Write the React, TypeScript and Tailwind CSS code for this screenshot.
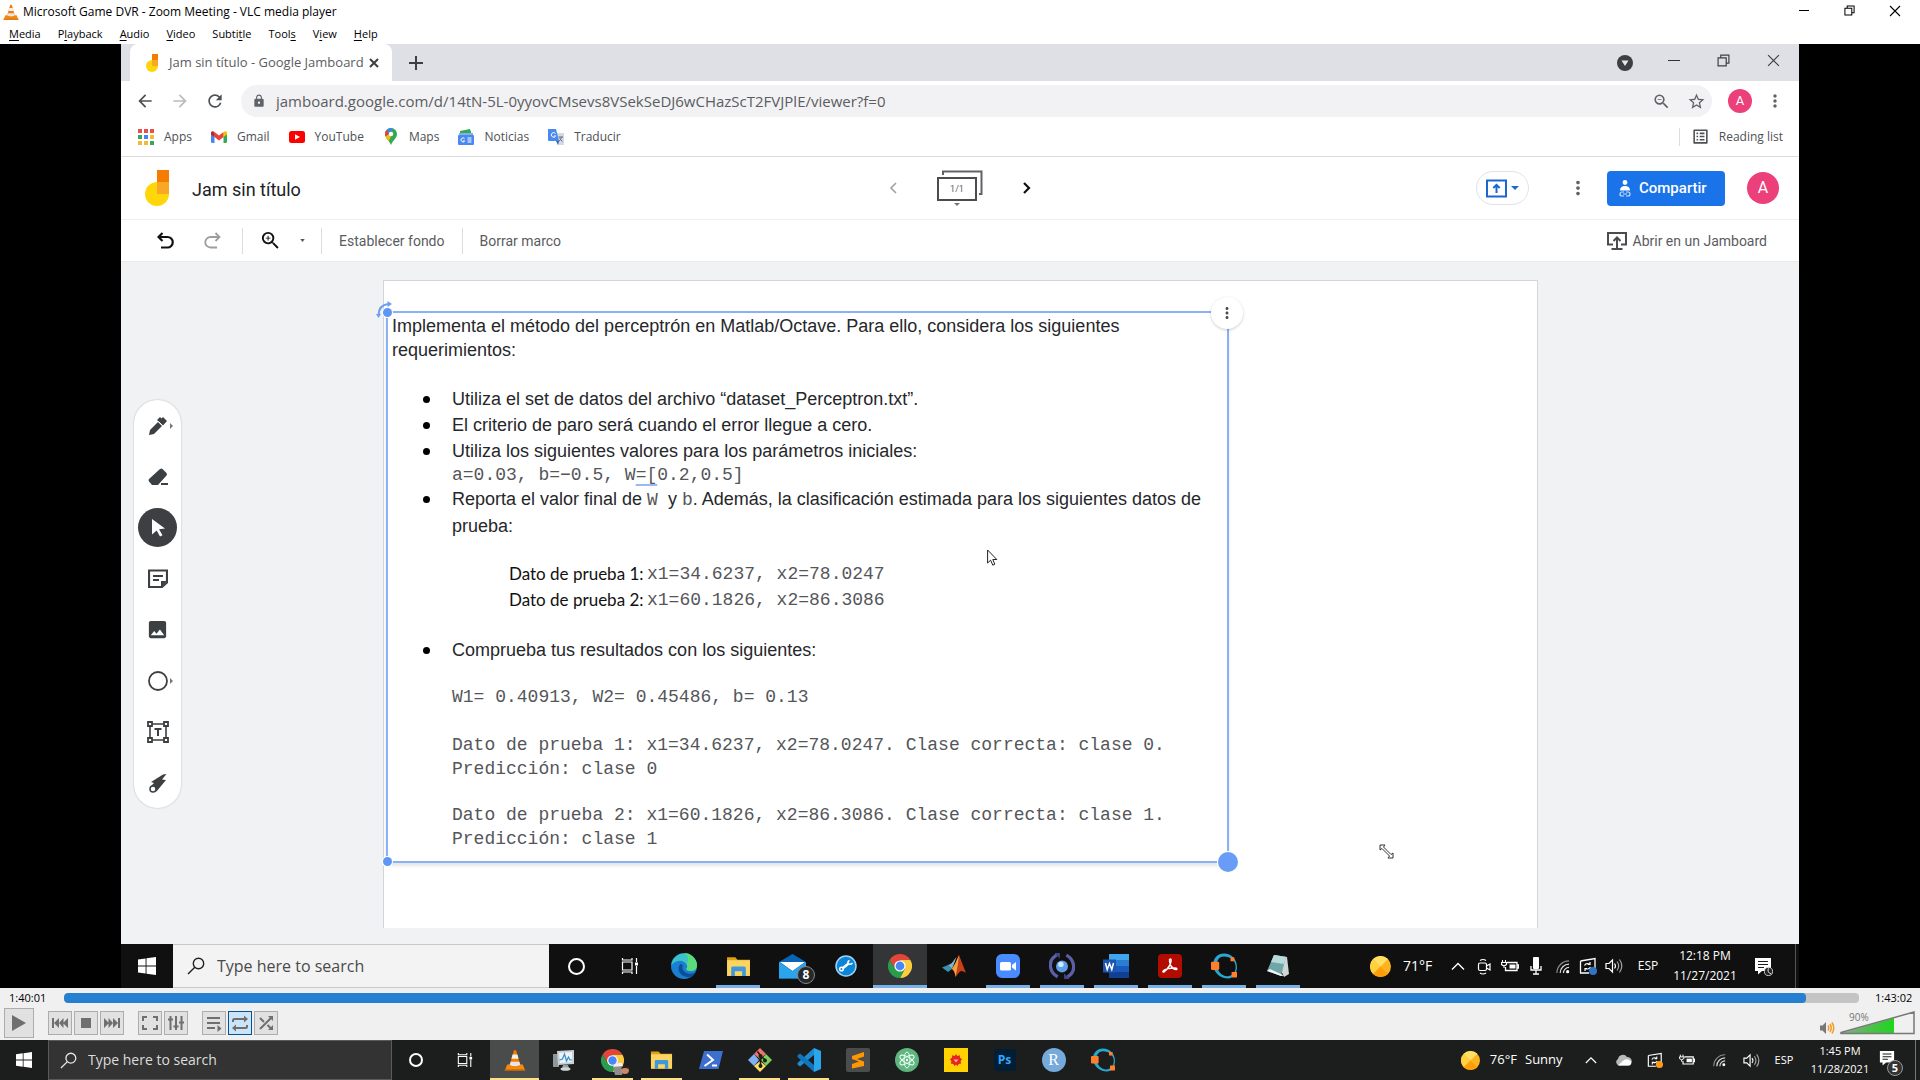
import React, { ReactNode } from "react";
import {
  MdArrowBack,
  MdArrowForward,
  MdRefresh,
  MdLock,
  MdStarBorder,
  MdZoomIn,
  MdZoomOut,
  MdMoreVert,
  MdImage,
  MdOutlineListAlt,
} from "react-icons/md";

/* ---------- shared drawings ---------- */

function Svg({ className, box = "0 0 24 24", children }: { className: string; box?: string; children: ReactNode }) {
  return (
    <svg className={className} viewBox={box} fill="none" aria-hidden="true">
      {children}
    </svg>
  );
}

function Cone({ className }: { className: string }) {
  return (
    <Svg className={className}>
      <path d="M3.500 17h17l2.500 6.200H1z" fill="#f58a0c" />
      <path d="M1 22h22l.4 1.600H.6z" fill="#c96a05" />
      <path d="M10.700 1.600Q12 .4 13.300 1.600L18 18.200Q12 21.600 6 18.200z" fill="#f47b00" />
      <path d="M9.400 6h5.200l1.300 4.600H8.100z" fill="#f1f1f1" />
      <path d="M7.200 14h9.600l1 3.400Q12 20 6.200 17.400z" fill="#e6e6e6" />
    </Svg>
  );
}

function WindowsLogo({ className }: { className: string }) {
  return (
    <Svg className={className} box="0 0 18 18">
      <path d="M0 2.500L7.600 1.400V8.500H0zM8.500 1.300L18 0V8.500H8.500zM0 9.500H7.600V16.600L0 15.500zM8.500 9.500H18V18L8.500 16.700z" fill="#fff" />
    </Svg>
  );
}

function Magnifier({ className }: { className: string }) {
  return (
    <Svg className={className} box="0 0 18 18">
      <circle cx="11.500" cy="6.500" r="5.200" stroke="currentColor" strokeWidth="1.400" />
      <path d="M7.800 10.200L1 17" stroke="currentColor" strokeWidth="1.400" />
    </Svg>
  );
}

function TaskView({ className }: { className: string }) {
  return (
    <Svg className={className} box="0 0 18 18">
      <path d="M1.500 5h9.500v8H1.500zM1.500 1v2h9.500V1M1.500 17v-2h9.500v2M15.500 1v4M15.500 9v8" stroke="#fff" strokeWidth="1.200" />
      <path d="M14 5.500h3v3h-3z" fill="#fff" />
    </Svg>
  );
}

function Chrome({ className }: { className: string }) {
  return (
    <Svg className={className}>
      <path d="M1.600 6A12 12 0 0 1 22.400 6H12L7.200 14.800z" fill="#e2463a" />
      <path d="M22.400 6A12 12 0 0 1 12 24L16.800 14.800 12 6z" fill="#fccb3f" />
      <path d="M12 24A12 12 0 0 1 1.600 6L7.200 14.800H16.800z" fill="#2a9d4c" />
      <circle cx="12" cy="12" r="5.600" fill="#fff" />
      <circle cx="12" cy="12" r="4.400" fill="#4a86f5" />
    </Svg>
  );
}

function Folder({ className }: { className: string }) {
  return (
    <Svg className={className}>
      <path d="M1 3h8l2 2.500h12V21H1z" fill="#e0a010" />
      <path d="M1 6h22v15H1z" fill="#fcd462" />
      <path d="M5 21v-7.500Q5 12 6.500 12h11Q19 12 19 13.500V21h-3.500v-4.500h-7V21z" fill="#3f97dc" />
    </Svg>
  );
}

function Octave({ className }: { className: string }) {
  return (
    <Svg className={className}>
      <path d="M12 .5C19 .5 24 6 24 13c0 6-3.500 10.500-8 10.500C8.500 23.500 2 17.500 2 10.500 2 5 6 .5 12 .5zm0 2.800C8 3.300 5.400 6.500 5.400 10.800c0 5.600 4.600 10.600 9.600 10.600 4.500 0 7.800-3.400 7.800-8.400C22.800 7.500 18 3.300 12 3.300z" fill="#28a8cf" fillRule="evenodd" />
      <rect x="0" y="8" width="7.600" height="7.600" rx="1" fill="#ff7f2a" />
      <rect x="18" y="4" width="3.600" height="3.600" rx=".5" fill="#ff7f2a" />
      <rect x="19" y="17.500" width="5" height="5" rx=".5" fill="#ff7f2a" />
    </Svg>
  );
}

function Sun({ className }: { className: string }) {
  return (
    <Svg className={className}>
      <circle cx="12" cy="12" r="12" fill="#ffb41f" />
      <path d="M3.500 3.500A12 12 0 0 1 20.500 3.500L12 12z" fill="#ffe064" />
      <path d="M3.500 3.500A12 12 0 0 0 3.500 20.500L12 12z" fill="#ffd040" />
      <path d="M3.500 20.500A12 12 0 0 0 20.500 20.500L12 12z" fill="#ff9d0a" />
    </Svg>
  );
}

function ChevronUp({ className }: { className: string }) {
  return (
    <Svg className={className} box="0 0 14 14">
      <path d="M1 10.500L7 4.500l6 6" stroke="#fff" strokeWidth="1.400" />
    </Svg>
  );
}

function Wifi({ className }: { className: string }) {
  return (
    <Svg className={className} box="0 0 16 16">
      <path d="M2 15A13 13 0 0 1 15 2" stroke="#8b8b8b" strokeWidth="1.300" />
      <path d="M5.500 15A9.500 9.500 0 0 1 15 5.500M9 15a6 6 0 0 1 6-6" stroke="#ddd" strokeWidth="1.300" />
      <circle cx="13.500" cy="13.500" r="1.700" fill="#fff" />
    </Svg>
  );
}

function Volume({ className }: { className: string }) {
  return (
    <Svg className={className} box="0 0 18 18">
      <path d="M1 6.500h3L7.500 3v12L4 11.500H1z" stroke="#fff" strokeWidth="1.200" />
      <path d="M9.500 6.500q2 2.500 0 5" stroke="#fff" strokeWidth="1.200" />
      <path d="M12 4.500q3.400 4.500 0 9M14.500 2.500q4.600 6.500 0 13" stroke="#a5a5a5" strokeWidth="1.200" />
    </Svg>
  );
}

function UpdateIcon({ className, dot }: { className: string; dot: string }) {
  return (
    <Svg className={className} box="0 0 18 18">
      <path d="M1.500 4L16 1.500V14M1.500 4v12H10" stroke="#fff" strokeWidth="1.300" />
      <path d="M5.500 8.500q1.500-3 5-1.500M11 5v2.500H8.500M11.500 10q-1.500 3-5 1.500M6 14v-2.500h2" stroke="#fff" strokeWidth="1.200" />
      <circle cx="14" cy="14" r="4" fill={dot} />
    </Svg>
  );
}

function Battery({ className }: { className: string }) {
  return (
    <Svg className={className} box="0 0 18 18">
      <path d="M6 5.500h10v8H4.500V10M16 8h1.500v3H16" stroke="#fff" strokeWidth="1.300" />
      <path d="M8.500 7.500h6v4h-6z" fill="#fff" />
      <path d="M1.500 3v2.500M4.500 3v2.500M.5 5.500h5v2q-2.500 2.500-5 0zM3 8.500V11" stroke="#fff" strokeWidth="1.100" />
    </Svg>
  );
}

function Note({ className }: { className: string }) {
  return (
    <Svg className={className} box="0 0 18 18">
      <path d="M1 1h16v13H8l-4 3.500V14H1z" fill="#fff" />
      <path d="M4 4.500h10M4 7.500h10M4 10.500h6" stroke="#1c1c1c" strokeWidth="1.200" />
    </Svg>
  );
}

function Jam({ className }: { className: string }) {
  return (
    <Svg className={className} box="0 0 24 36">
      <path d="M12 0h12v12H12z" fill="#f57c00" />
      <path d="M12 12H24V24A12 12 0 1 1 12 12z" fill="#ffd60a" />
      <path d="M12 12h12v12H12z" fill="#f9a825" />
    </Svg>
  );
}

function RestoreGlyph({ className }: { className: string }) {
  return (
    <Svg className={className} box="0 0 12 12">
      <path d="M1 3.500h7.500V11H1zM3.500 3.500V1H11v7.500H8.500" stroke="currentColor" strokeWidth="1.100" />
    </Svg>
  );
}

function CloseGlyph({ className }: { className: string }) {
  return (
    <Svg className={className} box="0 0 12 12">
      <path d="M1 1l10 10M11 1L1 11" stroke="currentColor" strokeWidth="1.100" />
    </Svg>
  );
}

/* ---------- player window ---------- */

const MENUS: [string, string, string][] = [
  ["", "M", "edia"],
  ["P", "l", "ayback"],
  ["", "A", "udio"],
  ["", "V", "ideo"],
  ["Subti", "t", "le"],
  ["Tool", "s", ""],
  ["V", "i", "ew"],
  ["", "H", "elp"],
];

function PlayerHeader() {
  return (
    <header className="bg-white text-black">
      <div className="flex h-6 items-center pl-[3px]">
        <Cone className="h-4 w-4" />
        <h1 className="ml-1 text-xs">Microsoft Game DVR - Zoom Meeting - VLC media player</h1>
        <div className="ml-auto flex h-full pr-[2px] pb-[3px]">
          <button aria-label="Minimize" className="flex w-[45px] items-center justify-center">
            <span className="h-px w-[10px] bg-black" />
          </button>
          <button aria-label="Restore" className="flex w-[46px] items-center justify-center">
            <RestoreGlyph className="h-[11px] w-[11px]" />
          </button>
          <button aria-label="Close" className="flex w-[46px] items-center justify-center">
            <CloseGlyph className="h-3 w-3" />
          </button>
        </div>
      </div>
      <nav className="flex h-5 items-center gap-[17px] pl-[9px] text-[11px]">
        {MENUS.map(([a, b, c]) => (
          <button key={a + b + c}>
            {a}
            <span className="underline underline-offset-2">{b}</span>
            {c}
          </button>
        ))}
      </nav>
    </header>
  );
}

function PlayerButton({ label, active, children }: { label: string; active?: boolean; children: ReactNode }) {
  return (
    <button
      aria-label={label}
      className={
        active
          ? "flex h-6 w-6 items-center justify-center border border-[#00549a] bg-[#cce4f7]"
          : "flex h-6 w-6 items-center justify-center border border-[#adadad] bg-[#e1e1e1]"
      }
    >
      {children}
    </button>
  );
}

function PlayerControls() {
  return (
    <section className="h-[52px] bg-[#f0f0f0] text-black">
      <div className="flex h-5 items-center pb-px text-[11px]">
        <span className="w-16 pl-[9px] leading-none">1:40:01</span>
        <div className="relative h-[10px] flex-1 overflow-hidden rounded bg-[#c4c4c4]">
          <div className="h-full rounded bg-[#267fd0]" style={{ width: `${(6001 / 6182) * 100}%` }} />
          <input type="range" aria-label="Position" min={0} max={6182} defaultValue={6001} className="absolute inset-0 h-full w-full opacity-0" />
        </div>
        <span className="w-[61px] pl-4 leading-none">1:43:02</span>
      </div>
      <div className="flex items-center pl-1">
        <button aria-label="Play" className="flex h-[30px] w-[30px] items-center justify-center border border-[#adadad] bg-[#e1e1e1]">
          <Svg className="h-4 w-4" box="0 0 16 16">
            <path d="M1 0L15 8 1 16z" fill="#6f6f6f" />
          </Svg>
        </button>
        <div className="ml-[14px] flex gap-[2px]">
          <PlayerButton label="Previous">
            <Svg className="h-4 w-4" box="0 0 16 16">
              <path d="M0 3h2v10H0zM2 8l5-5v10zM7 8l4.500-5v10zM11 8l5-5v10z" fill="#6f6f6f" />
            </Svg>
          </PlayerButton>
          <PlayerButton label="Stop">
            <span className="h-[10px] w-[10px] bg-[#6f6f6f]" />
          </PlayerButton>
          <PlayerButton label="Next">
            <Svg className="h-4 w-4" box="0 0 16 16">
              <path d="M14 3h2v10h-2zM14 8L9 3v10zM9 8L4.500 3v10zM5 8L0 3v10z" fill="#6f6f6f" />
            </Svg>
          </PlayerButton>
        </div>
        <div className="ml-[14px] flex gap-[2px]">
          <PlayerButton label="Fullscreen">
            <Svg className="h-[18px] w-[18px]" box="0 0 18 18">
              <path d="M6 3H2v4M12 3h4v4M6 15H2v-4M12 15h4v-4" stroke="#6f6f6f" strokeWidth="2" />
            </Svg>
          </PlayerButton>
          <PlayerButton label="Extended settings">
            <Svg className="h-[18px] w-[18px]" box="0 0 18 18">
              <path d="M3.500 2v14M9 2v14M14.500 2v14M1 5.500h5M6.500 12.500h5M12 8.500h5" stroke="#6f6f6f" strokeWidth="2" />
            </Svg>
          </PlayerButton>
        </div>
        <div className="ml-[14px] flex gap-[2px]">
          <PlayerButton label="Playlist">
            <Svg className="h-[18px] w-[18px]" box="0 0 18 18">
              <path d="M2 4h13M2 9h13M2 14h8" stroke="#6f6f6f" strokeWidth="2" />
              <path d="M12.500 11l4 3.500-4 3.500z" fill="#6f6f6f" />
            </Svg>
          </PlayerButton>
          <PlayerButton label="Loop" active>
            <Svg className="h-[18px] w-[18px]" box="0 0 18 18">
              <path d="M2 8V6.500Q2 5 3.500 5H14M16 11v1.500q0 1.500-1.500 1.500H4" stroke="#6f6f6f" strokeWidth="2" />
              <path d="M13 1.500L17 5l-4 3.500zM5 10.500L1 14l4 3.500z" fill="#6f6f6f" />
            </Svg>
          </PlayerButton>
          <PlayerButton label="Random">
            <Svg className="h-[18px] w-[18px]" box="0 0 18 18">
              <path d="M3 15L14 4M3 4l4 4M10.500 11l4 4" stroke="#6f6f6f" strokeWidth="2" />
              <path d="M11 2h5v5zM16 11v5h-5z" fill="#6f6f6f" />
            </Svg>
          </PlayerButton>
        </div>
        <div className="ml-auto flex items-end pr-1">
          <Svg className="mr-[5px] h-[14px] w-[15px]" box="0 0 15 14">
            <path d="M0 4.500h2.500L6 1v12L2.500 9.500H0z" fill="#777" />
            <path d="M8 4.500q1.500 2.500 0 5M10 3q2.500 4 0 8M12 1.500q3.500 5.500 0 11" stroke="#f59a23" strokeWidth="1.500" />
          </Svg>
          <div className="relative h-6 w-[76px]">
            <Svg className="h-6 w-[76px]" box="0 0 76 24">
              <path d="M2 22L54 7V22z" fill="url(#vol)" />
              <path d="M1 21.500L74 1V22.500H1z" stroke="#777" strokeWidth="1.500" />
              <defs>
                <linearGradient id="vol" x1="0" y1="0" x2="54" y2="0" gradientUnits="userSpaceOnUse">
                  <stop stopColor="#86a886" />
                  <stop offset="1" stopColor="#1ed61e" />
                </linearGradient>
              </defs>
            </Svg>
            <span className="absolute left-[9px] top-0 text-[10px] leading-3 text-[#777]">90%</span>
            <input type="range" aria-label="Volume" min={0} max={125} defaultValue={90} className="absolute inset-0 h-full w-full opacity-0" />
          </div>
        </div>
      </div>
    </section>
  );
}

/* ---------- host taskbar ---------- */

function HostApp({ label, state, children }: { label: string; state?: "open" | "active"; children: ReactNode }) {
  return (
    <button
      aria-label={label}
      className={
        state === "active"
          ? "relative flex h-full w-[49px] items-center justify-center bg-[#4a4b4b]"
          : "relative flex h-full w-[49px] items-center justify-center"
      }
    >
      {children}
      {state && (
        <span className={state === "active" ? "absolute inset-x-0 bottom-0 h-[2px] bg-[#ffe08a]" : "absolute inset-x-1 bottom-0 h-[2px] bg-[#ffe08a]"} />
      )}
    </button>
  );
}

function HostTaskbar() {
  return (
    <footer className="flex h-10 items-center bg-[#1c1e1d] text-white">
      <button aria-label="Start" className="flex h-full w-12 items-center justify-center">
        <WindowsLogo className="h-4 w-4" />
      </button>
      <label className="flex h-full w-[344px] items-center border border-[#5a5a5a] bg-[#333] pl-[11px] text-[#e6e6e6]">
        <Magnifier className="h-[17px] w-[17px]" />
        <input aria-label="Search" placeholder="Type here to search" className="ml-[11px] w-64 bg-transparent text-sm outline-none placeholder:text-[#dcdcdc]" />
      </label>
      <button aria-label="Cortana" className="flex h-full w-12 items-center justify-center">
        <span className="h-[14px] w-[14px] rounded-full border-2 border-white" />
      </button>
      <button aria-label="Task View" className="flex h-full w-[50px] items-center justify-center">
        <TaskView className="h-4 w-4" />
      </button>
      <HostApp label="VLC" state="active">
        <Cone className="h-[22px] w-[22px]" />
      </HostApp>
      <HostApp label="Performance Monitor">
        <Svg className="h-6 w-6">
          <path d="M1 6h6v13H1z" fill="#8f979b" />
          <path d="M5 3l17-1v14L6 17z" fill="#c9cfd2" />
          <path d="M7 5l13-1v10L8 15z" fill="#eef3f7" />
          <path d="M7.500 12l3-1 2-5 2 7 2-4 1.500 3h2" stroke="#2e8fd0" strokeWidth="1.200" />
          <path d="M11 17h5l1 3h-7z" fill="#9aa2a6" />
          <ellipse cx="13.500" cy="21" rx="5" ry="1.800" fill="#d0d5d8" />
        </Svg>
      </HostApp>
      <HostApp label="Chrome" state="open">
        <Chrome className="h-[23px] w-[23px]" />
        <Svg className="absolute bottom-1 right-2 h-[14px] w-4" box="0 0 16 14">
          <path d="M0 5q4-5 9-3l2 3-2 8H2z" fill="#8d8f8f" />
          <path d="M0 5q3-5 9-4l1 3z" fill="#efefef" />
          <circle cx="12" cy="8" r="4" fill="#c78a68" />
          <path d="M8 7q1-4 5-3.500 3 .5 3 4-3-2.500-8-.5z" fill="#2d1d18" />
        </Svg>
      </HostApp>
      <HostApp label="File Explorer" state="open">
        <Folder className="h-6 w-[23px]" />
      </HostApp>
      <HostApp label="PowerShell">
        <Svg className="h-6 w-6">
          <path d="M5 3h19l-4.500 18H0z" fill="#3d6fd1" />
          <path d="M8 6.500l6 5.500-8.500 6M13 17.500h5" stroke="#fff" strokeWidth="2" />
        </Svg>
      </HostApp>
      <HostApp label="Git" state="open">
        <Svg className="h-6 w-6">
          <path d="M12 0l6 6-6 5-6-5z" fill="#f1736c" />
          <path d="M6 6l5 6-5 6-6-6z" fill="#7fb0f5" />
          <path d="M18 6l6 6-6 6-5-6z" fill="#80cf5a" />
          <path d="M12 13l6 5-6 6-6-6z" fill="#ffdd66" />
          <path d="M9.500 3.500l3 4v11M12.500 8l5 4" stroke="#1c1e1d" strokeWidth="1.600" />
          <circle cx="12.500" cy="8" r="2" fill="#1c1e1d" />
          <circle cx="12.500" cy="18" r="2" fill="#1c1e1d" />
          <circle cx="17" cy="12.500" r="2" fill="#1c1e1d" />
        </Svg>
      </HostApp>
      <HostApp label="VS Code" state="open">
        <Svg className="h-6 w-6">
          <path d="M17 0l7 3v18l-7 3z" fill="#2aa6ef" />
          <path d="M17 0v7L3 18.500.5 16.500V15z" fill="#1f8ad2" />
          <path d="M17 24v-7L3 5.500.5 7.500V9z" fill="#0f75bd" />
        </Svg>
      </HostApp>
      <HostApp label="Sublime Text">
        <Svg className="h-6 w-6">
          <rect width="24" height="24" rx="2" fill="#4c4c4c" />
          <path d="M6 8l12-4v4.500L11 11l7 2.500V18L6 20.500V16l7-2.500L6 11z" fill="#ff9800" />
        </Svg>
      </HostApp>
      <HostApp label="Atom">
        <Svg className="h-6 w-6">
          <circle cx="12" cy="12" r="12" fill="#5fb57d" />
          <g stroke="#e5fff0" strokeWidth="1">
            <ellipse cx="12" cy="12" rx="3" ry="8" />
            <ellipse cx="12" cy="12" rx="3" ry="8" transform="rotate(60 12 12)" />
            <ellipse cx="12" cy="12" rx="3" ry="8" transform="rotate(120 12 12)" />
          </g>
          <circle cx="12" cy="12" r="1.200" fill="#fff" />
        </Svg>
      </HostApp>
      <HostApp label="Mathematica">
        <Svg className="h-6 w-6">
          <path d="M0 0h24v24H0z" fill="#ffd200" />
          <path d="M12 6l1.300 2 2.500-.8.200 2.600 2.200 1.400-1.600 1.900.6 2.400-2.500.4-1.200 2.100L12 16.500 10.500 18l-1.200-2.100-2.500-.4.600-2.400-1.600-1.900L8 9.800l.2-2.600 2.500.8z" fill="#e52520" />
          <path d="M9.500 11.500h5L12 14.500z" fill="#ff9f9a" />
        </Svg>
      </HostApp>
      <HostApp label="Photoshop">
        <span className="flex h-[22px] w-[22px] items-center justify-center rounded bg-[#001e36] text-xs font-bold text-[#31a8ff]">Ps</span>
      </HostApp>
      <HostApp label="R">
        <span className="flex h-6 w-6 items-center justify-center rounded-full bg-[#76aadb] font-['Liberation_Serif',serif] text-base text-white">R</span>
      </HostApp>
      <HostApp label="Octave">
        <Octave className="h-6 w-6" />
      </HostApp>

      <div className="ml-auto flex h-full items-center">
        <Sun className="h-[19px] w-[19px]" />
        <span className="ml-[10px] text-[13px]">76°F</span>
        <span className="ml-2 w-[50px] text-[13px]">Sunny</span>
        <span className="flex w-8 justify-center"><ChevronUp className="h-3 w-3" /></span>
        <span className="flex w-8 justify-center">
          <Svg className="h-3 w-[17px]" box="0 0 17 12">
            <path d="M4 11.500a3.500 3.500 0 0 1-1-6.500A5 5 0 0 1 12 3a4 4 0 0 1 1 8.500z" fill="#b9b9b9" />
            <path d="M3 11.500L9 6q4-2 6.500 1a2.800 2.800 0 0 1-1 4.500z" fill="#fff" />
          </Svg>
        </span>
        <span className="flex w-8 justify-center"><UpdateIcon className="h-4 w-4" dot="#ff9a1f" /></span>
        <span className="flex w-8 justify-center"><Battery className="h-4 w-4" /></span>
        <span className="flex w-8 justify-center"><Wifi className="h-[14px] w-[14px]" /></span>
        <span className="flex w-8 justify-center"><Volume className="h-[17px] w-[17px]" /></span>
        <span className="w-[34px] text-center text-[11px]">ESP</span>
        <div className="flex w-[78px] flex-col items-center text-[11px] leading-[18px]">
          <span>1:45 PM</span>
          <span>11/28/2021</span>
        </div>
        <span className="relative flex h-full w-6 items-center">
          <Note className="mb-1 h-4 w-4" />
          <span className="absolute bottom-1 right-0 flex h-4 w-4 items-center justify-center rounded-full border border-[#999] bg-[#333] text-[11px] font-bold">5</span>
        </span>
        <span className="ml-3 mr-1 h-full w-px bg-[#777]" />
      </div>
    </footer>
  );
}

/* ---------- recorded desktop: browser ---------- */

const BOOKMARKS: { name: string; icon: ReactNode }[] = [
  {
    name: "Apps",
    icon: (
      <Svg className="h-4 w-4" box="0 0 16 16">
        <path d="M0 0h4v4H0zM6 0h4v4H6zM12 0h4v4h-4z" fill="#e8514a" />
        <path d="M0 6h4v4H0zM12 12h4v4h-4z" fill="#3fa45b" />
        <path d="M6 6h4v4H6z" fill="#4285f4" />
        <path d="M12 6h4v4h-4zM0 12h4v4H0zM6 12h4v4H6z" fill="#eebc3a" />
      </Svg>
    ),
  },
  {
    name: "Gmail",
    icon: (
      <Svg className="h-[14px] w-4" box="0 0 16 14">
        <path d="M0 3h3.500v10H1.500Q0 13 0 11.500z" fill="#4285f4" />
        <path d="M12.500 3H16v8.500q0 1.500-1.500 1.500h-2z" fill="#34a853" />
        <path d="M3.500 2L8 5.500 12.500 2v5L8 10.500 3.500 7z" fill="#ea4335" />
        <path d="M0 3q0-3 3.500-1v5L0 4.500z" fill="#c5221f" />
        <path d="M16 3q0-3-3.500-1v5L16 4.500z" fill="#fbbc04" />
      </Svg>
    ),
  },
  {
    name: "YouTube",
    icon: (
      <Svg className="h-3 w-4" box="0 0 16 12">
        <rect width="16" height="12" rx="2.500" fill="#f00" />
        <path d="M6 3.300l5 2.700-5 2.700z" fill="#fff" />
      </Svg>
    ),
  },
  {
    name: "Maps",
    icon: (
      <Svg className="h-[17px] w-4" box="0 0 16 17">
        <path d="M8 0a6 6 0 0 1 6 6c0 4-4 6-6 11-2-5-6-7-6-11a6 6 0 0 1 6-6z" fill="#34a853" />
        <path d="M3.500 2A6 6 0 0 1 10 .3L5 7.500z" fill="#4285f4" />
        <path d="M3.500 2Q1 5 2.600 8.500L6 5z" fill="#ea4335" />
        <path d="M2.600 8.500L9.500 4 6 13Q3 10 2.600 8.500z" fill="#fbbc04" />
        <circle cx="8" cy="6" r="2.200" fill="#fff" />
      </Svg>
    ),
  },
  {
    name: "Noticias",
    icon: (
      <Svg className="h-4 w-4" box="0 0 16 16">
        <path d="M2 2l10-2 2 6H2z" fill="#34a853" />
        <path d="M1 4h14v4H1z" fill="#82b1e8" />
        <rect x="0" y="6" width="16" height="10" rx="1" fill="#4a8af0" />
        <path d="M6.500 9.500a2 2 0 1 0 .2 2.500H5M9.500 9h4M9.500 11h4M9.500 13h4" stroke="#fff" />
      </Svg>
    ),
  },
  {
    name: "Traducir",
    icon: (
      <Svg className="h-4 w-4" box="0 0 16 16">
        <path d="M6 4h10v12h-6z" fill="#d5d9e0" />
        <path d="M0 0h8l3 12H1q-1 0-1-1z" fill="#4a8af0" />
        <path d="M7.500 4.500a2.300 2.300 0 1 0 .2 2.500H5.800" stroke="#fff" />
        <path d="M10.500 8H15M13.500 8q-.5 3-3 4.500M11.500 9.500l3 3" stroke="#5f6b80" />
        <path d="M8 12h3l-1 4z" fill="#2f5fc4" />
      </Svg>
    ),
  },
];

function BrowserChrome() {
  return (
    <div className="bg-white">
      <div className="flex h-[37px] items-center bg-[#dfe0e5] pl-[9px] text-[#3c4043]">
        <div className="flex h-full w-[262px] items-center rounded-t-lg bg-white pl-4">
          <Jam className="h-[18px] w-3" />
          <span className="ml-[11px] text-[13px] text-[#5a5d61]">Jam sin título - Google Jamboard</span>
          <button aria-label="Close tab" className="ml-[5px]">
            <Svg className="h-[10px] w-[10px]" box="0 0 10 10">
              <path d="M1 1l8 8M9 1L1 9" stroke="#3c4043" strokeWidth="2" />
            </Svg>
          </button>
        </div>
        <button aria-label="New tab" className="ml-[17px]">
          <Svg className="h-[14px] w-[14px]" box="0 0 14 14">
            <path d="M7 0v14M0 7h14" stroke="#3c4043" strokeWidth="2" />
          </Svg>
        </button>
        <div className="ml-auto flex h-full items-center">
          <Svg className="mr-6 h-4 w-4" box="0 0 16 16">
            <circle cx="8" cy="8" r="8" fill="#3c4043" />
            <path d="M4.500 5.500h7L8 11z" fill="#e8e8e8" />
          </Svg>
          <button aria-label="Minimize" className="flex h-full w-[34px] items-center justify-center pb-1">
            <span className="h-px w-3 bg-[#333]" />
          </button>
          <button aria-label="Restore" className="ml-[7px] flex h-full w-[50px] items-center justify-center pb-1">
            <RestoreGlyph className="h-[13px] w-[13px]" />
          </button>
          <button aria-label="Close" className="flex h-full w-[51px] items-center justify-center pb-1">
            <CloseGlyph className="h-[13px] w-[13px]" />
          </button>
        </div>
      </div>

      <div className="flex h-10 items-center px-[14px] text-[#5f6368]">
        <button aria-label="Back"><MdArrowBack className="h-5 w-5 text-[#4d5054]" /></button>
        <button aria-label="Forward" className="ml-[15px]"><MdArrowForward className="h-5 w-5 text-[#b9bbbe]" /></button>
        <button aria-label="Reload" className="ml-[15px]"><MdRefresh className="h-5 w-5 text-[#4d5054]" /></button>
        <label className="ml-4 flex h-8 flex-1 items-center rounded-full bg-[#f2f2f4] pl-[11px] pr-[6px]">
          <MdLock className="h-[14px] w-[14px]" />
          <input
            aria-label="Address"
            defaultValue="jamboard.google.com/d/14tN-5L-0yyovCMsevs8VSekSeDJ6wCHazScT2FVJPlE/viewer?f=0"
            className="ml-[10px] flex-1 bg-transparent text-[15px] text-[#5a5d61] outline-none"
          />
          <MdZoomOut className="h-[19px] w-[19px]" />
          <MdStarBorder className="ml-4 h-[19px] w-[19px]" />
        </label>
        <span className="ml-4 flex h-6 w-6 items-center justify-center rounded-full bg-[#ec407a] font-['Roboto',sans-serif] text-[13px] text-white">A</span>
        <button aria-label="Menu" className="ml-[13px]"><MdMoreVert className="h-5 w-5" /></button>
      </div>

      <div className="flex h-9 items-center border-b border-[#dadce0] pb-1 pl-[17px] pr-4 text-xs text-[#4d5054]">
        <nav className="flex gap-[19px]">
          {BOOKMARKS.map((b) => (
            <a key={b.name} href="#" className="flex items-center gap-[10px]">
              {b.icon}
              {b.name}
            </a>
          ))}
        </nav>
        <span className="ml-auto h-[18px] w-px bg-[#dadce0]" />
        <button className="ml-[11px] flex items-center gap-[9px]">
          <MdOutlineListAlt className="h-[19px] w-[19px]" />
          Reading list
        </button>
      </div>
    </div>
  );
}

/* ---------- recorded desktop: whiteboard ---------- */

function BoardHeader() {
  return (
    <div className="bg-white font-['Roboto',sans-serif] text-[#202124]">
      <div className="grid h-[63px] grid-cols-[1fr_auto_1fr] items-center border-b border-[#eceef0] px-5">
        <div className="flex items-center pl-1">
          <Jam className="h-9 w-6" />
          <h2 className="ml-[23px] pt-[3px] text-lg">Jam sin título</h2>
        </div>
        <div className="flex items-center">
          <button aria-label="Previous frame">
            <Svg className="h-3 w-2" box="0 0 8 12">
              <path d="M7 1L2 6l5 5" stroke="#a0a0a0" strokeWidth="1.600" />
            </Svg>
          </button>
          <button aria-label="Frames" className="relative mx-10 h-9 w-[46px]">
            <Svg className="h-9 w-[46px]" box="0 0 46 36">
              <path d="M6 5V1.500H44.500V24H42" stroke="#5f6368" strokeWidth="2" />
              <path d="M1 8h38v22H1z" stroke="#4a4c50" strokeWidth="2" />
              <path d="M17 33h6l-3 3z" fill="#777" />
            </Svg>
            <span className="absolute left-0 top-[14px] w-10 text-center text-[9px] leading-[10px] text-[#5f6368]">1/1</span>
          </button>
          <button aria-label="Next frame">
            <Svg className="h-3 w-2" box="0 0 8 12">
              <path d="M1 1l5 5-5 5" stroke="#111" strokeWidth="2.200" />
            </Svg>
          </button>
        </div>
        <div className="flex items-center justify-end">
          <button aria-label="Present" className="flex h-[34px] w-[53px] items-center justify-center gap-1 rounded-full border border-[#e0e2e6]">
            <Svg className="h-[19px] w-[21px]" box="0 0 21 19">
              <path d="M1 1.500h19v16H1z" stroke="#1a67d2" strokeWidth="2" />
              <path d="M10.500 14V6M7.300 9l3.200-3.200L13.700 9" stroke="#1a67d2" strokeWidth="2" />
            </Svg>
            <Svg className="h-1 w-2" box="0 0 8 4"><path d="M0 0h8L4 4z" fill="#1a67d2" /></Svg>
          </button>
          <button aria-label="More" className="ml-[38px] mr-[18px] text-[#5f6368]"><MdMoreVert className="h-[22px] w-[22px]" /></button>
          <button className="flex h-[35px] w-[118px] items-center rounded bg-[#1a73e8] pl-3 text-[15px] font-medium text-white">
            <Svg className="mr-2 h-[17px] w-3" box="0 0 12 17">
              <circle cx="6" cy="2.500" r="2.400" fill="#fff" />
              <path d="M1 10.500q0-4.500 5-4.500t5 4.500z" fill="#fff" />
              <path d="M5 12H3a2 2 0 0 0 0 4h2M7 12h2a2 2 0 0 1 0 4H7M4 14h4" stroke="#cfe0fa" strokeWidth="1.200" />
            </Svg>
            Compartir
          </button>
          <span className="ml-[22px] flex h-8 w-8 items-center justify-center rounded-full bg-[#ec407a] text-base text-white">A</span>
        </div>
      </div>

      <div className="flex h-[42px] items-center border-b border-[#eaebed] pl-9 pr-8 text-sm text-[#5a5c60]">
        <button aria-label="Undo">
          <Svg className="h-[17px] w-[17px]" box="0 0 17 17">
            <path d="M5.500 1L1.500 5l4 4M2 5h8.500a5 5 0 0 1 0 10.500H4" stroke="#111" strokeWidth="2.200" />
          </Svg>
        </button>
        <button aria-label="Redo" className="ml-[30px]">
          <Svg className="h-[17px] w-[17px]" box="0 0 17 17">
            <path d="M11.500 1l4 4-4 4M15 5H6.500a5 5 0 0 0 0 10.500H13" stroke="#9e9e9e" strokeWidth="1.800" />
          </Svg>
        </button>
        <span className="ml-[21px] h-[26px] w-px bg-[#dadce0]" />
        <button aria-label="Zoom" className="ml-4 flex items-center">
          <MdZoomIn className="h-[23px] w-[23px] text-[#111]" />
          <Svg className="ml-[18px] h-[3px] w-[5px]" box="0 0 6 4"><path d="M0 0h6L3 4z" fill="#555" /></Svg>
        </button>
        <span className="ml-4 h-[26px] w-px bg-[#dadce0]" />
        <button className="ml-[17px]">Establecer fondo</button>
        <span className="ml-[17px] h-[26px] w-px bg-[#dadce0]" />
        <button className="ml-[17px]">Borrar marco</button>
        <button className="ml-auto flex items-center gap-[6px]">
          <Svg className="h-[18px] w-5" box="0 0 20 18">
            <path d="M6 12.500H1V1h18v11.500h-5M10 17V6.500M6.500 9L10 5.500 13.500 9M4.500 17h11" stroke="#4a4c50" strokeWidth="2" />
          </Svg>
          Abrir en un Jamboard
        </button>
      </div>
    </div>
  );
}

const G = "#3c4043";
const TOOLS: { name: string; icon: ReactNode; more?: boolean; active?: boolean }[] = [
  {
    name: "Pen",
    more: true,
    icon: (
      <Svg className="h-5 w-5" box="0 0 20 20">
        <path d="M1 19l1-5 8-8 4 4-8 8z" fill={G} />
        <path d="M9 4l3-3 1.500 1.500L15 1l4 4-4 4.500z" fill={G} />
        <path d="M8 3.500l2-2M10.500 5.500l4 4" stroke="#fff" />
      </Svg>
    ),
  },
  {
    name: "Eraser",
    icon: (
      <Svg className="h-5 w-5" box="0 0 20 20">
        <path d="M1 12L12 2q1.500-1 2.500 0l4 4q1 1.500 0 2.500L10 18H4l-3-3.500q-1-1.200 0-2.500z" fill={G} />
        <path d="M13 17h7" stroke={G} strokeWidth="2" />
      </Svg>
    ),
  },
  {
    name: "Select",
    active: true,
    icon: (
      <Svg className="h-5 w-5" box="0 0 20 20">
        <path d="M4 1l13 9.500-6 .8 3.500 6-2.500 1.300-3.300-6L4 16.500z" fill="#fff" />
      </Svg>
    ),
  },
  {
    name: "Sticky note",
    icon: (
      <Svg className="h-5 w-5" box="0 0 20 20">
        <path d="M1 1.500h18v12L14 18H1z" stroke={G} strokeWidth="2.200" />
        <path d="M5 7h10M5 11h6" stroke={G} strokeWidth="2" />
        <path d="M13 12h6l-6 6.500z" fill={G} />
      </Svg>
    ),
  },
  { name: "Image", icon: <MdImage className="h-[23px] w-[23px] text-[#3c4043]" /> },
  {
    name: "Shape",
    more: true,
    icon: (
      <Svg className="h-5 w-5" box="0 0 20 20">
        <circle cx="10" cy="10" r="9" stroke={G} strokeWidth="1.800" />
      </Svg>
    ),
  },
  {
    name: "Text box",
    icon: (
      <Svg className="h-[22px] w-[22px]" box="0 0 22 22">
        <path d="M5 3h12M5 19h12M3 5v12M19 5v12" stroke={G} strokeWidth="1.600" />
        <path d="M1 1h4v4H1zM17 1h4v4h-4zM1 17h4v4H1zM17 17h4v4h-4z" fill="#fff" stroke={G} strokeWidth="1.800" />
        <path d="M7.500 8h7M11 8v7" stroke={G} strokeWidth="2" />
      </Svg>
    ),
  },
  {
    name: "Laser",
    icon: (
      <Svg className="h-5 w-5" box="0 0 20 20">
        <path d="M3 9L15 1.500l3.500-.5-4.500 5.500 4 .5L8.500 18.500 2 14l4-4z" fill={G} />
        <circle cx="5" cy="16" r="3" fill="#fff" stroke={G} strokeWidth="1.500" />
      </Svg>
    ),
  },
];

function ToolRail() {
  return (
    <div className="ml-[13px] flex w-[47px] flex-col rounded-full bg-white shadow-[0_0_2px_rgba(0,0,0,0.25)]">
      {TOOLS.map((t) => (
        <button key={t.name} aria-label={t.name} className="relative flex h-[51px] items-center justify-center">
          <span className={t.active ? "flex h-[39px] w-[39px] items-center justify-center rounded-full bg-[#3c4043]" : "flex items-center justify-center"}>
            {t.icon}
          </span>
          {t.more && (
            <Svg className="absolute right-2 top-[23px] h-[6px] w-[3px]" box="0 0 3 6">
              <path d="M0 0l3 3-3 3z" fill="#777" />
            </Svg>
          )}
        </button>
      ))}
    </div>
  );
}

function Bullet({ children }: { children: ReactNode }) {
  return (
    <li className="flex leading-[26px]">
      <span className="mt-[10px] mr-[22px] h-[7px] w-[7px] shrink-0 rounded-full bg-black" />
      <div>{children}</div>
    </li>
  );
}

const MONO = "font-['Liberation_Mono',monospace] text-[#55565a]";

function TextFrame() {
  return (
    <div className="relative mt-[30px] ml-[2px] w-[843px] border-2 border-[#8ab0f8] pt-px pr-1 pb-[10px] pl-1 font-['Liberation_Sans',sans-serif] text-lg leading-6 text-[#26272a] shadow-[0_3px_3px_rgba(0,0,0,0.1)]">
      <p className="w-[780px]">
        Implementa el método del perceptrón en Matlab/Octave. Para ello, considera los siguientes requerimientos:
      </p>
      <ul className="mt-6 pl-[31px]">
        <Bullet>Utiliza el set de datos del archivo “dataset_Perceptron.txt”.</Bullet>
        <Bullet>El criterio de paro será cuando el error llegue a cero.</Bullet>
        <Bullet>
          Utiliza los siguientes valores para los parámetros iniciales:
          <p className={`${MONO} leading-[22px]`}>
            a=0.03, b=−0.5, W
            <span className="underline decoration-[#9bb9f5] decoration-2 underline-offset-4">=[</span>
            0.2,0.5]
          </p>
        </Bullet>
        <Bullet>
          Reporta el valor final de <span className={MONO}>W</span>
          {"\u00a0 "}y <span className={MONO}>b</span>. Además, la clasificación estimada para los siguientes datos de
          <br />
          prueba:
        </Bullet>
      </ul>
      <dl className="mt-[22px] pl-[117px] leading-[26px]">
        <div className="flex">
          <dt className="w-[138px] font-['Lato',sans-serif] text-[17px] text-[#111]">Dato de prueba 1:</dt>
          <dd className={MONO}>x1=34.6237, x2=78.0247</dd>
        </div>
        <div className="flex">
          <dt className="w-[138px] font-['Lato',sans-serif] text-[17px] text-[#111]">Dato de prueba 2:</dt>
          <dd className={MONO}>x1=60.1826, x2=86.3086</dd>
        </div>
      </dl>
      <ul className="mt-6 pl-[31px]">
        <Bullet>Comprueba tus resultados con los siguientes:</Bullet>
      </ul>
      <div className={`${MONO} pl-[60px]`}>
        <p className="mt-[22px]">W1= 0.40913, W2= 0.45486, b= 0.13</p>
        <p className="mt-6">
          Dato de prueba 1: x1=34.6237, x2=78.0247. Clase correcta: clase 0.
          <br />
          Predicción: clase 0
        </p>
        <p className="mt-[22px]">
          Dato de prueba 2: x1=60.1826, x2=86.3086. Clase correcta: clase 1.
          <br />
          Predicción: clase 1
        </p>
      </div>

      <Svg className="absolute -top-3 -left-3 h-[18px] w-[17px]" box="0 0 17 18">
        <path d="M2.500 14Q3 4 12 3" stroke="#6d9df5" strokeWidth="2" />
        <path d="M11.500 0l4.500 3-4.500 3zM0 13h5l-2.500 4z" fill="#6d9df5" />
      </Svg>
      <span className="absolute -top-[5px] -left-[5px] h-[9px] w-[9px] rounded-full bg-[#5f96f5] ring-1 ring-white" />
      <span className="absolute -bottom-[5px] -left-[5px] h-[9px] w-[9px] rounded-full bg-[#5f96f5] ring-1 ring-white" />
      <span className="absolute -right-[11px] -bottom-[11px] h-5 w-5 rounded-full bg-[#699cf7] ring-1 ring-white" />
      <button
        aria-label="Frame options"
        className="absolute -top-4 -right-4 flex h-8 w-8 items-center justify-center rounded-full bg-white shadow-[0_1px_3px_rgba(0,0,0,0.2)]"
      >
        <MdMoreVert className="h-[18px] w-[18px] text-[#4a4c50]" />
      </button>
    </div>
  );
}

function Board() {
  return (
    <div className="flex flex-1 items-stretch bg-[#f1f2f4] pt-[18px] pb-4">
      <div className="flex w-[262px] shrink-0 items-center">
        <ToolRail />
      </div>
      <div className="relative flex-1 border-t border-x border-[#d3d5d9] bg-white">
        <TextFrame />
        <Svg className="absolute top-[268px] left-[603px] h-[17px] w-[11px]" box="0 0 11 17">
          <path d="M.6 1v13l3-2.800 2.200 5 2-1-2-4.700h4z" fill="#fff" stroke="#222" />
        </Svg>
        <Svg className="absolute top-[563px] left-[995px] h-[15px] w-[15px]" box="0 0 15 15">
          <path d="M1 1h5L4.500 3l7.500 7.500 2-1.500v5H9l1.500-2L3 4.500 1 6z" fill="#fff" stroke="#333" />
        </Svg>
      </div>
      <div className="w-[261px] shrink-0" />
    </div>
  );
}

/* ---------- recorded desktop: taskbar ---------- */

function GuestApp({ label, state, children }: { label: string; state?: "open" | "active"; children: ReactNode }) {
  return (
    <button
      aria-label={label}
      className={
        state === "active"
          ? "relative flex h-full w-[54px] items-center justify-center bg-[#343536]"
          : "relative flex h-full w-[54px] items-center justify-center"
      }
    >
      {children}
      {state && (
        <span className={state === "active" ? "absolute inset-x-0 bottom-0 h-[3px] bg-[#76b2e8]" : "absolute inset-x-[5px] bottom-0 h-[3px] bg-[#76b2e8]"} />
      )}
    </button>
  );
}

function GuestTaskbar() {
  return (
    <div className="flex h-11 items-center bg-[#101010] text-white">
      <button aria-label="Start" className="flex h-full w-[52px] items-center justify-center">
        <WindowsLogo className="h-[18px] w-[18px]" />
      </button>
      <label className="flex h-full w-[376px] items-center border-y border-[#c8c8c8] bg-[#f3f3f3] pl-[14px] text-[#222]">
        <Magnifier className="h-[18px] w-[18px]" />
        <input aria-label="Search" placeholder="Type here to search" className="ml-3 w-72 bg-transparent text-base outline-none placeholder:text-[#4a4a4a]" />
      </label>
      <GuestApp label="Cortana">
        <span className="h-[17px] w-[17px] rounded-full border-2 border-white" />
      </GuestApp>
      <GuestApp label="Task View">
        <TaskView className="h-[18px] w-[18px]" />
      </GuestApp>
      <GuestApp label="Edge">
        <Svg className="h-[26px] w-[26px]">
          <circle cx="12" cy="12" r="12" fill="#1a7fd0" />
          <path d="M.5 9.500A12 12 0 0 1 24 11q0 5-5 5.500-4 .3-5-1.500 2-2 .5-4.500Q11 6 5.500 7.500 2 8.500.500 11z" fill="#3cc3c9" />
          <path d="M12 0a12 12 0 0 1 12 11q0 5-5 5.500-4 .3-5-1.500 2-2 .5-4.500Q18 3 12 0z" fill="#5bdc7a" />
          <path d="M9 10q-4 4-.5 9 3 3.500 9 3.500 3-1 5-4.500-5 2.500-9 0-4-2.500-2.500-6.500z" fill="#0b4f9c" />
        </Svg>
      </GuestApp>
      <GuestApp label="File Explorer" state="open">
        <Folder className="h-[25px] w-[25px]" />
      </GuestApp>
      <GuestApp label="Mail">
        <Svg className="h-[25px] w-[27px]" box="0 0 27 25">
          <path d="M0 8L13.500 0 27 8v16.500H0z" fill="#0a64b4" />
          <path d="M1 8h25l-12.500 9z" fill="#fff" />
          <path d="M0 8l13.500 9L27 8v16.500H0z" fill="#2ba4ec" />
        </Svg>
        <span className="absolute right-1 bottom-1 flex h-[18px] w-[18px] items-center justify-center rounded-full border border-[#888] bg-[#26292c] text-xs font-bold">8</span>
      </GuestApp>
      <GuestApp label="Wrench">
        <Svg className="h-[22px] w-[22px]" box="0 0 22 22">
          <circle cx="11" cy="11" r="10" fill="#0b86d6" stroke="#9ed3f5" strokeWidth="1.500" />
          <path d="M7.500 13.500l6-5" stroke="#fff" strokeWidth="2.500" />
          <circle cx="6.500" cy="14" r="1.800" stroke="#fff" strokeWidth="1.500" />
          <path d="M14.500 5.500q-2.500 1-1 3.200 2 1.500 4-.7" stroke="#fff" strokeWidth="1.500" />
        </Svg>
      </GuestApp>
      <GuestApp label="Chrome" state="active">
        <Chrome className="h-6 w-6" />
      </GuestApp>
      <GuestApp label="Matlab">
        <Svg className="h-6 w-6">
          <path d="M0 13.500L6 11l4 4-4 3z" fill="#3d8fb0" />
          <path d="M6 11q4-1 6-5l2.500-3-4.500 12z" fill="#7fb6c9" />
          <path d="M17 1q3 8 7 18-4-3-6-1.500-2 2-4.500 5.500Q13 17 10 15q4-6 7-14z" fill="#c8401a" />
          <path d="M17 1q-1 11-3.500 22Q13 17 10 15q4-6 7-14z" fill="#f3a13a" />
        </Svg>
      </GuestApp>
      <GuestApp label="Zoom" state="open">
        <Svg className="h-6 w-6">
          <rect width="24" height="24" rx="6" fill="#4a8cff" />
          <rect x="4" y="8" width="11" height="8.500" rx="1.500" fill="#fff" />
          <path d="M16 11l4-3v8.500l-4-3z" fill="#fff" />
        </Svg>
      </GuestApp>
      <GuestApp label="Sync" state="open">
        <Svg className="h-[26px] w-[26px]">
          <path d="M7 2Q0 6 1.500 13.500 2.500 19 8 22M17 22q7-4 5.500-11.500Q21.500 5 16 2" stroke="#5a5fa8" strokeWidth="3" />
          <path d="M5 0h5v5zM19 24h-5v-5z" fill="#44488f" />
          <circle cx="12" cy="12.500" r="5.500" fill="#5f9fe8" />
          <circle cx="11" cy="10.500" r="2.500" fill="#cfe6fb" />
        </Svg>
      </GuestApp>
      <GuestApp label="Word" state="open">
        <Svg className="h-6 w-[26px]" box="0 0 26 24">
          <path d="M6 0h20v6H6z" fill="#41a5ee" />
          <path d="M6 6h20v6H6z" fill="#2b7cd3" />
          <path d="M6 12h20v6H6z" fill="#185abd" />
          <path d="M6 18h20v6H6z" fill="#103f91" />
          <path d="M0 5.500h13v13H0z" fill="#1b55b0" />
          <path d="M2.500 9l1.700 6.500L6.500 9.500l2.300 6L10.500 9" stroke="#fff" strokeWidth="1.500" />
        </Svg>
      </GuestApp>
      <GuestApp label="Acrobat" state="open">
        <Svg className="h-6 w-6">
          <rect width="24" height="24" rx="4" fill="#b30b00" />
          <path d="M11.500 5.500q2-1.500 1.500 2Q12 13 6 18q-2 .5-.5-1.500Q9 14 17 14q3 .5 1.500 1.500-2.500.5-5.500-3.500-2-4-1.500-6.500z" stroke="#fff" strokeWidth="1.400" />
        </Svg>
      </GuestApp>
      <GuestApp label="Octave" state="open">
        <Octave className="h-[26px] w-[26px]" />
      </GuestApp>
      <GuestApp label="Notepad" state="open">
        <Svg className="h-6 w-6">
          <path d="M8 1l13 2 2 17-5 3z" fill="#cfd8d6" />
          <path d="M8 1l12 2-5 19L1 17z" fill="#6fa7a8" />
          <path d="M8 1l12 2-2 7L5 8z" fill="#b9dadb" />
          <path d="M1 17l14 5 3-.5L4 15z" fill="#f3f6f6" />
        </Svg>
      </GuestApp>

      <div className="ml-auto flex h-full items-center">
        <Sun className="h-[21px] w-[21px]" />
        <span className="ml-3 w-[42px] text-sm">71°F</span>
        <span className="flex w-[26px] justify-center"><ChevronUp className="h-[14px] w-[14px]" /></span>
        <span className="flex w-[26px] justify-center">
          <Svg className="h-[17px] w-[14px]" box="0 0 14 17">
            <rect x="1.500" y="5" width="8" height="7.500" rx="1.500" stroke="#fff" strokeWidth="1.200" />
            <path d="M9.500 8L13 6v6L9.500 10M3 2.500Q6 .5 9 2.500M3 15q3 2 6 0" stroke="#fff" strokeWidth="1.200" />
          </Svg>
        </span>
        <span className="flex w-[26px] justify-center"><Battery className="h-[18px] w-[18px]" /></span>
        <span className="flex w-[26px] justify-center">
          <Svg className="h-[18px] w-3" box="0 0 12 18">
            <rect x="3" y="0" width="6" height="12" rx="1" fill="#fff" />
            <path d="M1 9v4h10V9M6 13v4M3 17h6" stroke="#fff" strokeWidth="1.300" />
          </Svg>
        </span>
        <span className="flex w-[26px] justify-center"><Wifi className="h-[15px] w-[15px]" /></span>
        <span className="flex w-[26px] justify-center"><UpdateIcon className="h-[18px] w-[18px]" dot="#3274c4" /></span>
        <span className="flex w-[26px] justify-center"><Volume className="h-[18px] w-[18px]" /></span>
        <span className="w-[42px] text-center text-xs">ESP</span>
        <div className="flex w-[72px] flex-col items-center text-xs leading-5">
          <span>12:18 PM</span>
          <span>11/27/2021</span>
        </div>
        <span className="relative flex w-11 justify-center">
          <Note className="h-[18px] w-[18px]" />
          <Svg className="absolute -bottom-px right-[12px] h-[9px] w-[9px]" box="0 0 10 10">
            <circle cx="5" cy="5" r="4.500" fill="#222" stroke="#ddd" />
            <path d="M5 1.500a4 4 0 0 0 3 6" stroke="#fff" />
          </Svg>
        </span>
        <span className="ml-[10px] mr-[3px] h-full w-px bg-[#555]" />
      </div>
    </div>
  );
}

export default function App() {
  return (
    <div className="flex min-h-screen flex-col bg-black font-['Open_Sans',sans-serif]">
      <PlayerHeader />
      <main className="flex flex-1 flex-col px-[121px]">
        <BrowserChrome />
        <BoardHeader />
        <Board />
        <GuestTaskbar />
      </main>
      <PlayerControls />
      <HostTaskbar />
    </div>
  );
}
